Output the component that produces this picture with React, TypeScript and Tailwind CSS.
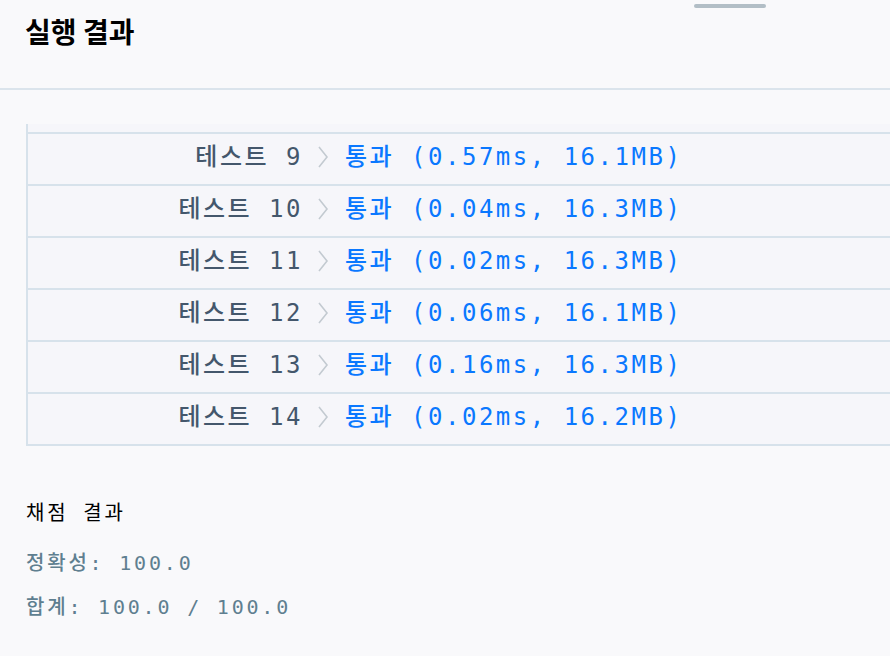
const mono = "font-['DejaVu_Sans_Mono','Noto_Sans_CJK_KR',monospace]";

const results = [
  { no: 9, time: '0.57ms', mem: '16.1MB' },
  { no: 10, time: '0.04ms', mem: '16.3MB' },
  { no: 11, time: '0.02ms', mem: '16.3MB' },
  { no: 12, time: '0.06ms', mem: '16.1MB' },
  { no: 13, time: '0.16ms', mem: '16.3MB' },
  { no: 14, time: '0.02ms', mem: '16.2MB' },
];

function Chevron() {
  return (
    <svg width="12" height="24" viewBox="0 0 12 24" className="shrink-0">
      <path d="M2 2 L10 12 L2 22" fill="none" stroke="#c3cad1" strokeWidth="1.6" />
    </svg>
  );
}

export default function App() {
  return (
    <div className="relative h-[656px] w-[890px] overflow-hidden bg-[#f9f9fb]">
      {/* scrollbar thumb */}
      <div className="absolute left-[694px] top-[4px] h-[4px] w-[72px] rounded-sm bg-[#b2bec6]" />

      {/* Header */}
      <div className="h-[90px] border-b-2 border-[#dbe4ec] pl-[25px] pt-[11px]">
        <h2 className="font-['Noto_Sans_CJK_KR',sans-serif] text-[28px] font-bold leading-[40px] text-black">
          실행 결과
        </h2>
      </div>

      {/* Test rows */}
      <div className="pl-[26px] pt-[34px]">
        <div className="border-l-2 border-[#d7e2eb] bg-[#f6f6fa]">
          <div className="h-[10px] border-b-2 border-[#d7e2eb]" />
          {results.map(r => (
            <div
              key={r.no}
              className={`flex h-[52px] items-center border-b-2 border-[#d7e2eb] pb-[4px] text-[24px] font-medium tracking-[2.5px] ${mono}`}
            >
              <div className="w-[275px] shrink-0 text-right text-[#44576c]">
                테스트 {r.no}
              </div>
              <div className="ml-[14px] mr-[16px] flex items-center">
                <Chevron />
              </div>
              <div className="whitespace-pre text-[#0a78ff]">
                통과 ({r.time}, {r.mem})
              </div>
            </div>
          ))}
        </div>
      </div>

      {/* Score */}
      <div className={`pl-[26px] pt-[51px] tracking-[2.8px] ${mono}`}>
        <div className="text-[20px] font-normal leading-[32px] text-black">채점 결과</div>
        <div className="mt-[20px] text-[20px] font-medium leading-[28px] text-[#5f7f90]">정확성: 100.0</div>
        <div className="mt-[16px] text-[20px] font-medium leading-[28px] text-[#5f7f90]">합계: 100.0 / 100.0</div>
      </div>
    </div>
  );
}
